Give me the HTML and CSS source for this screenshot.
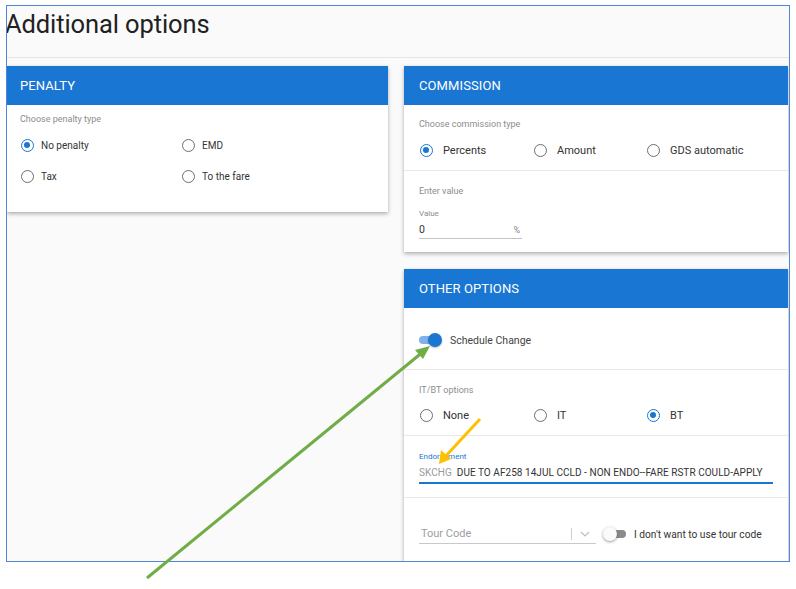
FILE: index.html
```html
<!DOCTYPE html>
<html>
<head>
<meta charset="utf-8">
<link rel="stylesheet" href="styles.css">
</head>
<body>
<div class="frame">
  <div class="title-bar"><h1 class="title">Additional options</h1></div>
  <div class="columns">
    <div class="col">
      <section class="card penalty">
        <div class="card-head">PENALTY</div>
        <div class="card-body">
          <div class="hint">Choose penalty type</div>
          <div class="radio-grid two">
            <label class="radio checked small"><span class="dot"></span>No penalty</label>
            <label class="radio small"><span class="dot"></span>EMD</label>
            <label class="radio small"><span class="dot"></span>Tax</label>
            <label class="radio small"><span class="dot"></span>To the fare</label>
          </div>
        </div>
      </section>
    </div>
    <div class="col">
      <section class="card commission">
        <div class="card-head">COMMISSION</div>
        <div class="section sec-type">
          <div class="hint">Choose commission type</div>
          <div class="radio-grid three">
            <label class="radio checked"><span class="dot"></span>Percents</label>
            <label class="radio"><span class="dot"></span>Amount</label>
            <label class="radio"><span class="dot"></span>GDS automatic</label>
          </div>
        </div>
        <div class="section sec-value">
          <div class="hint">Enter value</div>
          <div class="value-field">
            <div class="field-label">Value</div>
            <div class="value-input"><span>0</span><span class="suffix">%</span></div>
          </div>
        </div>
      </section>
      <section class="card other">
        <div class="card-head">OTHER OPTIONS</div>
        <div class="section sec-toggle">
          <div class="toggle on"><span class="track"></span><span class="thumb"></span></div>
          <span class="toggle-label">Schedule Change</span>
        </div>
        <div class="section sec-itbt">
          <div class="hint">IT/BT options</div>
          <div class="radio-grid three">
            <label class="radio"><span class="dot"></span>None</label>
            <label class="radio"><span class="dot"></span>IT</label>
            <label class="radio checked"><span class="dot"></span>BT</label>
          </div>
        </div>
        <div class="section sec-endorse">
          <div class="field-label blue">Endorsement</div>
          <div class="endorse-input"><span class="prefix">SKCHG</span>DUE TO AF258 14JUL CCLD - NON ENDO--FARE RSTR COULD-APPLY</div>
        </div>
        <div class="section sec-tour">
          <div class="tour-select">
            <span class="placeholder">Tour Code</span>
            <span class="sep"></span>
            <svg class="chev" width="10" height="6" viewBox="0 0 10 6"><path d="M1 1l4 4 4-4" fill="none" stroke="#bdbdbd" stroke-width="1.2"/></svg>
          </div>
          <div class="toggle off"><span class="track"></span><span class="thumb"></span></div>
          <span class="toggle-label dark">I don't want to use tour code</span>
        </div>
      </section>
    </div>
  </div>
</div>
<svg class="arrows" width="796" height="589" viewBox="0 0 796 589">
  <line x1="147" y1="578" x2="424" y2="351" stroke="#70ad47" stroke-width="3"/>
  <polygon points="430,346 415,350 423,359" fill="#70ad47"/>
  <line x1="480" y1="419" x2="444" y2="458" stroke="#ffc000" stroke-width="3"/>
  <polygon points="439,464 441,450 451,459" fill="#ffc000"/>
</svg>
</body>
</html>
```
FILE: styles.css
```css
* { box-sizing: border-box; }
html, body { margin: 0; padding: 0; background: #fff; }
body { font-family: Roboto, "Noto Sans", Arial, sans-serif; color: #212121; position: relative; width: 796px; height: 589px; }

.frame {
  position: relative;
  margin: 5px 0 0 6px;
  width: 784px;
  height: 557px;
  border: 1px solid #4f86d9;
  background: #fafafa;
  overflow: hidden;
}
.title-bar { height: 52px; border-bottom: 1px solid #e6e6e6; }
.title { margin: 0 0 0 -2px; font-weight: 400; font-size: 25.5px; line-height: 30px; padding-top: 3px; color: #212121; letter-spacing: -0.1px; }

.columns { display: grid; grid-template-columns: 381px 384px; column-gap: 16px; padding-top: 8px; }
.col { display: flex; flex-direction: column; gap: 17px; }

.card { background: #fff; box-shadow: 0 2px 4px rgba(0,0,0,0.28), 0 0 2px rgba(0,0,0,0.08); }
.card-head { height: 39px; background: #1976d2; color: #fff; font-size: 13px; display: flex; align-items: center; padding-left: 13px; letter-spacing: 0.1px; }
.other .card-head { padding-left: 15px; }
.commission .card-head { padding-left: 15px; }

.hint { font-size: 9px; color: #8d8d8d; line-height: 12px; }
.field-label { font-size: 8px; color: #8d8d8d; line-height: 10px; }
.field-label.blue { color: #1976d2; }

.penalty { height: 146px; }
.penalty .card-body { padding: 8px 13px 0 13px; }
.radio-grid { display: grid; }
.radio-grid.two { grid-template-columns: 161px 1fr; row-gap: 16px; margin-top: 13px; }
.radio-grid.three { grid-template-columns: 114px 113px 1fr; }

.radio { display: flex; align-items: center; font-size: 11px; color: #333; height: 15px; }
.radio.small { font-size: 10px; }
.radio .dot { width: 13px; height: 13px; border-radius: 50%; border: 1.5px solid #6e6e6e; margin-left: 1px; margin-right: 10px; position: relative; flex: none; }
.radio.small .dot { margin-right: 7px; }
.radio.checked .dot { border-color: #1976d2; }
.radio.checked .dot::after { content: ""; position: absolute; left: 2px; top: 2px; width: 6px; height: 6px; border-radius: 50%; background: #1976d2; }

.section { border-bottom: 1px solid #e8e8e8; padding-left: 15px; padding-right: 15px; }
.section:last-child { border-bottom: none; }

.sec-type { height: 66px; padding-top: 13px; }
.sec-type .radio-grid { margin-top: 13px; }
.sec-value { height: 81px; padding-top: 14px; }
.value-field { margin-top: 12px; width: 103px; }
.value-input { display: flex; justify-content: space-between; font-size: 10.5px; color: #333; height: 17px; line-height: 16px; border-bottom: 1.5px solid #c4c4c4; margin-top: 3px; }
.value-input .suffix { font-size: 9px; color: #888; padding-right: 2px; }

.sec-toggle { height: 62px; display: flex; align-items: center; padding-top: 3px; }
.toggle { position: relative; width: 24px; height: 16px; flex: none; }
.toggle .track { position: absolute; left: 0; top: 4px; width: 22px; height: 8px; border-radius: 4px; }
.toggle .thumb { position: absolute; top: 1px; width: 14px; height: 14px; border-radius: 50%; }
.toggle.on .track { background: #7fb1ea; }
.toggle.on .thumb { left: 9px; background: #1976d2; box-shadow: 0 1px 2px rgba(0,0,0,0.25); }
.toggle.off .track { background: #8a8a8a; }
.toggle.off .thumb { left: -1px; background: #fafafa; box-shadow: 0 1px 3px rgba(0,0,0,0.4); }
.toggle-label { font-size: 10.5px; color: #444; margin-left: 7px; white-space: nowrap; }
.toggle-label.dark { color: #333; margin-left: 6px; font-size: 10.2px; }

.sec-itbt { height: 66px; padding-top: 14px; }
.sec-itbt .radio-grid { margin-top: 12px; }

.sec-endorse { height: 62px; padding-top: 16px; padding-right: 15px; }
.endorse-input { margin-top: 3px; font-size: 10px; color: #333; line-height: 15px; height: 19px; border-bottom: 2px solid #1976d2; white-space: nowrap; letter-spacing: 0.05px; }
.endorse-input .prefix { color: #9a9a9a; margin-right: 5px; }

.sec-tour { height: 70px; display: flex; align-items: center; padding-top: 2px; }
.tour-select { width: 177px; height: 20px; border-bottom: 1.5px solid #c9c9c9; display: flex; align-items: center; position: relative; flex: none; }
.tour-select .placeholder { font-size: 11px; color: #9e9e9e; margin-left: 2px; flex: 1; }
.tour-select .sep { width: 1px; height: 12px; background: #cfcfcf; margin-right: 8px; }
.tour-select .chev { margin-right: 6px; }
.sec-tour .toggle { margin-left: 8px; }

.arrows { position: absolute; left: 0; top: 0; pointer-events: none; }
```
